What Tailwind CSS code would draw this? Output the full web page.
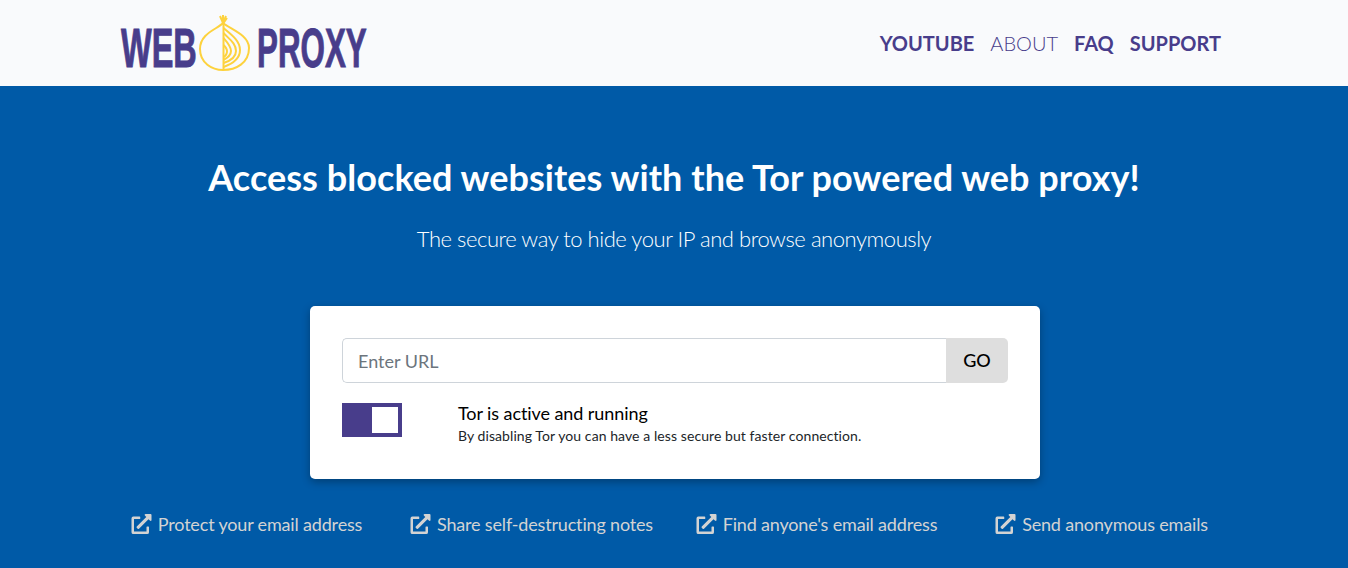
<!DOCTYPE html>
<html lang="en">
<head>
    <meta charset="UTF-8">
    <meta name="viewport" content="width=device-width, initial-scale=1.0">
    <title>Web Proxy</title>
    <script src="https://cdn.jsdelivr.net/npm/@tailwindcss/browser@4"></script>
</head>
<body class="bg-[#005aa7] font-['Lato',sans-serif] h-[568px] overflow-hidden">

    <header class="bg-[#f9fafc] h-[86px]">
        <div class="w-[1140px] h-full mx-auto flex justify-between items-center pl-[17px] pr-[23px]">
            <a href="#" class="flex items-center text-[#483d8b] font-['Liberation_Sans',sans-serif] font-bold text-[56px] leading-none [-webkit-text-stroke:1px_#483d8b]">
                <span class="w-[74px] mt-[10px] whitespace-nowrap origin-left scale-x-[0.58]">WEB</span>
                <!-- onion logo -->
                <svg class="w-[54px] h-[60px] ml-[3px]" viewBox="0 0 54 60" fill="none" stroke="#fdd23e" stroke-width="2">
                    <path d="M25 10C20 16 2 20 2 36C2 50 14 57 25 57C38 57 51 50 51 35C51 22 32 16 25 10Z"/>
                    <path d="M25.5 10V57"/>
                    <path d="M25.5 15C34 22 42 28 42 37C42 46 34 51 25.5 54"/>
                    <path d="M25.5 20C31 26 38 30 38 38C38 45 32 48 25.5 50"/>
                    <path d="M25.5 25C29 29 33 33 33 38C33 43 29 45 25.5 47"/>
                    <path d="M25.5 32C27.5 34 29 36 29 38C29 41 27.5 43 25.5 44"/>
                    <path d="M22 3L25 10L28 3M25 2V10M29 5L25.500 10" stroke-width="2"/>
                </svg>
                <span class="w-[108px] mt-[10px] ml-[5px] whitespace-nowrap origin-left scale-x-[0.56]">PROXY</span>
            </a>
            <nav class="flex gap-4 text-[20px] text-[#483d8b]">
                <a href="#" class="font-bold">YOUTUBE</a>
                <a href="#" class="font-light">ABOUT</a>
                <a href="#" class="font-bold">FAQ</a>
                <a href="#" class="font-bold">SUPPORT</a>
            </nav>
        </div>
    </header>

    <main class="text-white">
        <h1 class="mt-[68px] text-center text-[36px] leading-[46px] font-bold tracking-[0.05px]">Access blocked websites with the Tor powered web proxy!</h1>
        <p class="mt-[24px] text-center text-[22px] leading-[30px] font-light tracking-[-0.45px]">The secure way to hide your IP and browse anonymously</p>

        <section class="mt-[52px] ml-[310px] w-[730px] h-[173px] bg-white rounded-[5px] shadow-[0_3px_8px_rgba(0,0,0,0.3)] p-8 text-black">
            <div class="flex h-[45px]">
                <input type="text" placeholder="Enter URL" class="flex-1 min-w-0 border border-[#ced4da] border-r-0 rounded-l-[5px] pl-[15px] pr-4 pt-[2px] text-[18px] text-[#495057] placeholder:text-[#6c757d] outline-none">
                <button class="w-[62px] bg-[#dedede] rounded-r-[5px] text-[18px] font-medium text-black">GO</button>
            </div>
            <div class="flex mt-5">
                <div class="w-[60px] h-[34px] bg-[#483d8b] flex justify-end items-center pr-1">
                    <span class="w-[26px] h-[26px] bg-white"></span>
                </div>
                <div class="ml-14">
                    <p class="text-[18px] leading-[22px] mt-[-1px] tracking-[-0.08px]">Tor is active and running</p>
                    <p class="text-[14px] leading-[21px] mt-[1px] tracking-[0.08px] text-[#212529]">By disabling Tor you can have a less secure but faster connection.</p>
                </div>
            </div>
        </section>

        <div class="mt-[33px] mx-auto w-[1140px] grid grid-cols-4 text-center text-[18px] leading-6 tracking-[-0.17px] text-[#d3d3d3]">
            <a href="#"><svg class="inline-block w-[21px] h-[20px] mr-[6px] align-[-3px]" viewBox="0 0 512 512" fill="currentColor"><path d="M432,320H400a16,16,0,0,0-16,16V448H64V128H208a16,16,0,0,0,16-16V80a16,16,0,0,0-16-16H48A48,48,0,0,0,0,112V464a48,48,0,0,0,48,48H400a48,48,0,0,0,48-48V336A16,16,0,0,0,432,320ZM488,0h-128c-21.37,0-32.05,25.91-17,41l35.73,35.73L135,320.37a24,24,0,0,0,0,34L157.67,377a24,24,0,0,0,34,0L435.28,133.32,471,169c15,15,41,4.5,41-17V24A24,24,0,0,0,488,0Z"/></svg>Protect your email address</a>
            <a href="#"><svg class="inline-block w-[21px] h-[20px] mr-[6px] align-[-3px]" viewBox="0 0 512 512" fill="currentColor"><path d="M432,320H400a16,16,0,0,0-16,16V448H64V128H208a16,16,0,0,0,16-16V80a16,16,0,0,0-16-16H48A48,48,0,0,0,0,112V464a48,48,0,0,0,48,48H400a48,48,0,0,0,48-48V336A16,16,0,0,0,432,320ZM488,0h-128c-21.37,0-32.05,25.91-17,41l35.73,35.73L135,320.37a24,24,0,0,0,0,34L157.67,377a24,24,0,0,0,34,0L435.28,133.32,471,169c15,15,41,4.5,41-17V24A24,24,0,0,0,488,0Z"/></svg>Share self-destructing notes</a>
            <a href="#"><svg class="inline-block w-[21px] h-[20px] mr-[6px] align-[-3px]" viewBox="0 0 512 512" fill="currentColor"><path d="M432,320H400a16,16,0,0,0-16,16V448H64V128H208a16,16,0,0,0,16-16V80a16,16,0,0,0-16-16H48A48,48,0,0,0,0,112V464a48,48,0,0,0,48,48H400a48,48,0,0,0,48-48V336A16,16,0,0,0,432,320ZM488,0h-128c-21.37,0-32.05,25.91-17,41l35.73,35.73L135,320.37a24,24,0,0,0,0,34L157.67,377a24,24,0,0,0,34,0L435.28,133.32,471,169c15,15,41,4.5,41-17V24A24,24,0,0,0,488,0Z"/></svg>Find anyone's email address</a>
            <a href="#"><svg class="inline-block w-[21px] h-[20px] mr-[6px] align-[-3px]" viewBox="0 0 512 512" fill="currentColor"><path d="M432,320H400a16,16,0,0,0-16,16V448H64V128H208a16,16,0,0,0,16-16V80a16,16,0,0,0-16-16H48A48,48,0,0,0,0,112V464a48,48,0,0,0,48,48H400a48,48,0,0,0,48-48V336A16,16,0,0,0,432,320ZM488,0h-128c-21.37,0-32.05,25.91-17,41l35.73,35.73L135,320.37a24,24,0,0,0,0,34L157.67,377a24,24,0,0,0,34,0L435.28,133.32,471,169c15,15,41,4.5,41-17V24A24,24,0,0,0,488,0Z"/></svg>Send anonymous emails</a>
        </div>
    </main>
</body>
</html>
